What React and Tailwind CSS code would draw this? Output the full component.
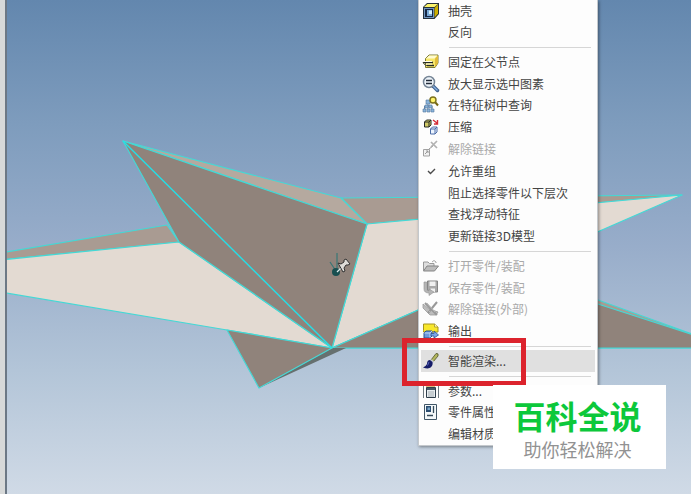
import React, { useState } from "react";

function Icon({ children }) {
  return (
    <svg viewBox="0 0 18 18" className="h-[18px] w-[18px] shrink-0" aria-hidden="true">
      {children}
    </svg>
  );
}

const ShellIcon = () => (
  <Icon>
    <path d="M1 5 5 1H17V12L12.500 17H1Z" fill="#27323c" />
    <path d="M2 5 5.500 2H16L12.500 5Z" fill="#fbf36a" />
    <path d="M12.500 6 16 2.500V11.500L12.500 15.500Z" fill="#cdb000" />
    <path d="M2 6H12V16H2Z" fill="#6f93bd" />
    <path d="M3 7H11V15H3Z" fill="#142644" />
    <path d="M5 8H10V14H5Z" fill="#78a8d6" />
    <path d="M7 8.500H10V12H7Z" fill="#d5f2fc" />
  </Icon>
);

const PinParentIcon = () => (
  <Icon>
    <path d="M3.500 5.500 7 2H16L16 10 13 14.500H3.500Z" fill="#f6e768" stroke="#7d7a35" />
    <path d="M4 5.500 7.200 2.500H15.500L12.500 5.500Z" fill="#fffbd0" />
    <path d="M13 5.500V14L16 10V2.500Z" fill="#e1bc3a" />
    <path d="M1 9.500H11M5 12.500H12" stroke="#242a26" strokeWidth="1.300" />
    <path d="M1 8.500H10M4 11H10" stroke="#fffce5" />
    <path d="M1 9.500 3.500 12.500H5" fill="none" stroke="#55583a" />
  </Icon>
);

const ZoomIcon = () => (
  <Icon>
    <path d="m11 11 4.500 4.500" stroke="#3f6190" strokeWidth="3.500" strokeLinecap="round" />
    <path d="m11 11 4.500 4.500" stroke="#89b3e3" strokeWidth="1.300" />
    <circle cx="7" cy="7" r="5.500" fill="#eef5fb" stroke="#768596" strokeWidth="1.500" />
    <path d="M4 5.500H10M4 8.500H10" stroke="#242d3a" strokeWidth="1.500" />
  </Icon>
);

const TreeSearchIcon = () => (
  <Icon>
    <path d="M6 5V9M2.500 14V10H10V14M6 9V14" fill="none" stroke="#6586ab" />
    <path d="M4 4H8V8H4ZM3 9H6V12H3ZM7 9H10V12H7ZM1 13H4V16H1ZM5 13H8V16H5ZM9 13H12V16H9Z" fill="#8ab4da" stroke="#52779d" strokeWidth=".6" />
    <path d="m13 6 3 3.500" stroke="#766612" strokeWidth="2" />
    <circle cx="11" cy="4" r="3" fill="#fff36b" stroke="#7b711e" strokeWidth="1.400" />
  </Icon>
);

const CompressIcon = () => (
  <Icon>
    <path d="M2.500 4 4.500 2H9V7L7 9H2.500Z" fill="#d0c966" stroke="#272b25" />
    <path d="M2.500 4H7V9M7 4 9 2" fill="none" stroke="#272b25" />
    <path d="m11 2 4 3M15.500 2V6H12" fill="none" stroke="#d42b36" strokeWidth="1.400" />
    <path d="M8.500 11 10.500 9H15V14L13 16H8.500Z" fill="#edf5ff" stroke="#4c6da8" />
    <path d="M8.500 11H13V16M13 11 15 9" fill="none" stroke="#4c6da8" />
  </Icon>
);

const UnlinkIcon = () => (
  <Icon>
    <path d="M1.500 9.500H7.500V16H1.500Z" fill="#f1f1f1" stroke="#a1a1a1" />
    <path d="M3 14 6 11M4 11H6V13M7 9 11 6" fill="none" stroke="#999" />
    <path d="m9 2 6 6M15 1 9 7" stroke="#b1b1b1" strokeWidth="1.700" />
  </Icon>
);

const CheckIcon = () => (
  <Icon>
    <path d="m6 9 2.500 2.500L13 7" fill="none" stroke="#4b4b4b" strokeWidth="1.400" />
  </Icon>
);

const OpenIcon = () => (
  <Icon>
    <path d="M1.500 13.500V5H6L7.500 6.500H12V9" fill="#dedede" stroke="#999" />
    <path d="M1.500 14 5 9H16.500L12.500 14Z" fill="#bcbcbc" stroke="#858585" />
    <path d="M10 5Q12 2 14 5V6" fill="none" stroke="#a5a5a5" />
  </Icon>
);

const SaveIcon = () => (
  <Icon>
    <path d="M5.500 2H15.500V13H7L5.500 11Z" fill="#a9a9a9" stroke="#858585" />
    <path d="M7.500 2.500H13.500V7H7.500ZM8.500 9.500H13V13H8.500Z" fill="#f0f0f0" />
    <path d="M2 3V10Q2 14 7 14V16.500L12 13 7 10V12Q4.500 12 4.500 9V3Z" fill="#b5b5b5" stroke="#929292" strokeWidth=".6" />
  </Icon>
);

const ExternalUnlinkIcon = () => (
  <Icon>
    <path d="M1 4V8L8 15H14L16 12 10 10 6 8Z" fill="#bdbdbd" stroke="#999" strokeWidth=".8" />
    <path d="m3 3 12 12M15 2 6 13" stroke="#999" strokeWidth="2" />
    <path d="m2 6 7 7M5 3 13 12" stroke="#b9b9b9" />
  </Icon>
);

const ExportIcon = () => (
  <Icon>
    <path d="M1.500 8.500V2H12.500L16 5V10H1.500Z" fill="#f8e72c" stroke="#a49420" />
    <path d="M12.500 2V5H16" fill="#fff8af" stroke="#9b862b" strokeWidth=".7" />
    <path d="M2 11 4 9H10V14L8 16H2Z" fill="#6e99dd" stroke="#29508e" />
    <path d="M2.500 11H8V15.500M8 11 10 9" fill="none" stroke="#bdd4fa" />
    <path d="M9 11.500H12V9L16.500 13 12 16V14H9Z" fill="#79a5e9" stroke="#29508e" strokeWidth=".8" />
  </Icon>
);

const BrushIcon = () => (
  <Icon>
    <path d="M9 8 14 1.500Q17 1 16 4L11 10Z" fill="#b3b65e" stroke="#4f5327" strokeWidth=".8" />
    <path d="m9 8 2.500 2.500" stroke="#caced1" strokeWidth="2" />
    <path d="M8 8Q5 8 5 12 4 14 1 15.500 8 18 10 14 11 12 10.500 10Z" fill="#151c68" />
    <path d="M7 10 5.500 13.500" stroke="#5765bb" />
  </Icon>
);

const ParametersIcon = () => (
  <Icon>
    <path d="M1.500 2V16M14 2H16.500V16" fill="none" stroke="#6d7880" />
    <path d="M4 3 7 1 13 3V6H4Z" fill="#d7bd82" />
    <path d="M4.500 5.500H13.500V15.500H4.500Z" fill="#e7edf0" stroke="#2e3e4b" />
    <path d="M5 6H13V8H5Z" fill="#455866" />
    <path d="M6 10H12M6 12H12M6 14H12" stroke="#a5adb2" />
  </Icon>
);

const PropertiesIcon = () => (
  <Icon>
    <path d="M2.500 1.500H14.500V16.500H2.500Z" fill="#f4f8fa" stroke="#415666" />
    <path d="M4 3H9V9H4Z" fill="#2b4d70" />
    <path d="M5.500 4.500H8V7H5.500Z" fill="#79a6cb" />
    <path d="M11.500 3V10M5 12.500H11" stroke="#344958" strokeWidth="1.300" />
  </Icon>
);

const menuGroups = [
  {
    size: "h-[43px]",
    items: [{ text: "抽壳", icon: ShellIcon }, { text: "反向" }],
  },
  {
    size: "h-[196px]",
    items: [
      { text: "固定在父节点", icon: PinParentIcon },
      { text: "放大显示选中图素", icon: ZoomIcon },
      { text: "在特征树中查询", icon: TreeSearchIcon },
      { text: "压缩", icon: CompressIcon },
      { text: "解除链接", icon: UnlinkIcon, disabled: true },
      { text: "允许重组", checkbox: true },
      { text: "阻止选择零件以下层次" },
      { text: "查找浮动特征" },
      { text: "更新链接3D模型" },
    ],
  },
  {
    size: "h-[87px]",
    items: [
      { text: "打开零件/装配", icon: OpenIcon, disabled: true },
      { text: "保存零件/装配", icon: SaveIcon, disabled: true },
      { text: "解除链接(外部)", icon: ExternalUnlinkIcon, disabled: true },
      { text: "输出", icon: ExportIcon },
    ],
  },
  {
    size: "h-[22px]",
    items: [{ text: "智能渲染...", icon: BrushIcon, active: true }],
  },
  {
    size: "h-[65px]",
    items: [
      { text: "参数...", icon: ParametersIcon },
      { text: "零件属性...", icon: PropertiesIcon },
      { text: "编辑材质..." },
    ],
  },
];

function MenuItem({ item }) {
  const [checked, setChecked] = useState(true);
  const row = "flex min-h-0 w-full items-center gap-2 pl-px text-left whitespace-nowrap";
  if (item.checkbox) {
    return (
      <label className={`${row} relative`}>
        <input
          type="checkbox"
          className="sr-only"
          checked={checked}
          onChange={(e) => setChecked(e.target.checked)}
        />
        {checked ? <CheckIcon /> : <Icon />}
        {item.text}
      </label>
    );
  }
  const Glyph = item.icon || Icon;
  return (
    <button
      type="button"
      disabled={item.disabled}
      className={`${row} disabled:text-[#a9a9a9] ${item.active ? "bg-[#e0e0e0]" : ""}`}
    >
      <Glyph />
      {item.text}
    </button>
  );
}

function ContextMenu() {
  return (
    <nav className="absolute top-0 left-[418px] w-[180px] border border-t-0 border-[#c4c8cc] bg-[#fdfdfd] px-0.5 text-xs leading-4 text-[#444444] shadow-[1px_1px_3px_#00000066]">
      {menuGroups.map((group, i) => (
        <React.Fragment key={group.size}>
          {i > 0 && (
            <div className="flex h-2 items-center pr-1 pl-7">
              <hr className="w-full border-[#d6d6d6]" />
            </div>
          )}
          <div className={`grid auto-rows-fr ${group.size}`}>
            {group.items.map((item) => (
              <MenuItem key={item.text} item={item} />
            ))}
          </div>
        </React.Fragment>
      ))}
    </nav>
  );
}

function ModelView() {
  return (
    <svg
      viewBox="7 0 684 494"
      preserveAspectRatio="xMinYMin slice"
      className="h-full min-w-0 flex-1"
      role="img"
      aria-label="3D"
    >
      <defs>
        <linearGradient id="sky" x1="0" y1="0" x2="0" y2="1">
          <stop offset="0" stopColor="#6387ae" />
          <stop offset=".25" stopColor="#7e9cbd" />
          <stop offset=".5" stopColor="#98adca" />
          <stop offset=".75" stopColor="#b3c5d8" />
          <stop offset="1" stopColor="#d0dae6" />
        </linearGradient>
      </defs>
      <rect x="7" width="684" height="494" fill="url(#sky)" />
      <g stroke="#45d8d5" strokeWidth="1.200" strokeLinejoin="round">
        <path d="M0 253 167 225 179 242 0 260Z" fill="#a99b92" />
        <path d="M0 260 179 242 332 348 227 330 0 292Z" fill="#e3dad2" />
        <path d="M341 198 682 195 367 224Z" fill="#a99b92" />
        <path d="M367 224 682 195 332 348Z" fill="#e3dad2" />
        <path d="M332 348 500 274 598 300 700 337V348Z" fill="#a99b92" />
        <path d="M332 348 500 274 598 304 700 337V348Z" fill="#90837b" />
        <path d="M259 388 332 348H346Z" fill="#66706f" stroke="none" />
        <path d="M227 330 332 348 259 388Z" fill="#90837b" />
        <path d="M123 141 341 198 367 224Z" fill="#b5a99f" />
        <path d="M123 141 367 224 332 348 179 242Z" fill="#90837b" />
        <path d="M123 141 332 348" fill="none" stroke="#24dfe7" strokeWidth="1.400" />
      </g>
      <path d="m330 262 6 9M337 253V268" stroke="#397776" strokeWidth="1.200" />
      <circle cx="336" cy="272" r="4" fill="#174f50" />
      <path d="m337 272 5-5" stroke="#dceced" strokeWidth="1.300" />
      <path d="m338 263 3 1 3-2V260l2-1 4 5-2 1h-2l-2 3 1 3-2 1Z" fill="#dedcd8" stroke="#333" />
    </svg>
  );
}

export default function App() {
  return (
    <main
      className="relative flex h-screen w-full overflow-hidden"
      style={{ fontFamily: '"Noto Sans CJK SC", sans-serif' }}
    >
      <div className="w-[7px] shrink-0 border-r-2 border-[#6c7885] bg-[#d7d9d9]" />
      <ModelView />
      <ContextMenu />
      <div className="pointer-events-none absolute top-[338px] left-[402px] h-12 w-31 border-5 border-[#dc232d]" />
      <aside className="absolute top-[385px] left-[493px] flex h-21 w-[173px] flex-col items-center justify-center gap-1 bg-white pt-1 pr-1">
        <strong className="text-[32px] leading-9 font-bold text-[#0cc83b]">百科全说</strong>
        <span className="text-lg leading-6 text-[#929292]">助你轻松解决</span>
      </aside>
    </main>
  );
}
